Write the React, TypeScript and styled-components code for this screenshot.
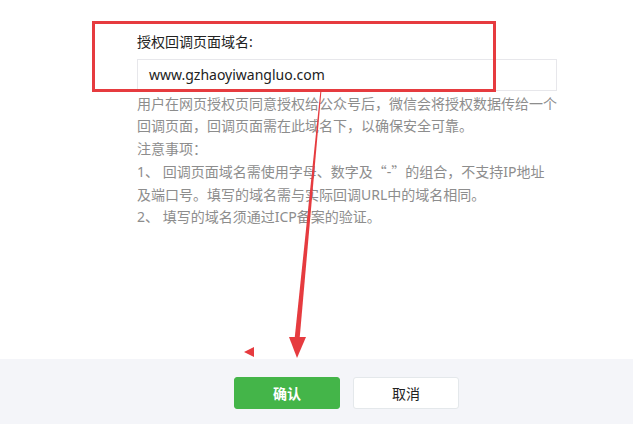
import React from "react";
import styled, { createGlobalStyle } from "styled-components";

const Global = createGlobalStyle`
  html, body { margin: 0; padding: 0; background: #ffffff; }
  body { font-family: "Noto Sans", "Noto Sans CJK SC", sans-serif; }
`;

const Page = styled.div`
  position: relative;
  width: 633px;
  height: 424px;
  display: flex;
  flex-direction: column;
  overflow: hidden;
`;

const Body = styled.div`
  flex: 1;
  padding: 32px 0 0 137px;
  display: flex;
  flex-direction: column;
`;

const Label = styled.div`
  font-size: 14px;
  line-height: 20px;
  color: #222222;
  height: 20px;
`;

const Input = styled.div`
  margin-top: 7px;
  width: 420px;
  height: 32px;
  box-sizing: border-box;
  border: 1px solid #e7e7eb;
  padding: 0 11px;
  font-size: 14px;
  line-height: 30px;
  color: #222222;
`;

const Desc = styled.div`
  margin-top: 2px;
  width: 430px;
  font-size: 14px;
  line-height: 22.4px;
  color: #8d8d8d;
  white-space: nowrap;
`;

const Quote = styled.span<{ $side: "open" | "close" }>`
  font-family: "Noto Sans CJK SC", sans-serif;
  display: inline-block;
  width: 14px;
  text-align: ${(p) => (p.$side === "open" ? "right" : "left")};
`;

const Footer = styled.div`
  height: 65px;
  background: #f4f5f9;
  display: flex;
  align-items: flex-start;
  padding: 18px 0 0 234px;
  box-sizing: border-box;
  gap: 13px;
`;

const Button = styled.div<{ $primary?: boolean }>`
  width: 106px;
  height: 32px;
  box-sizing: border-box;
  border-radius: 3px;
  display: flex;
  align-items: center;
  justify-content: center;
  font-size: 14px;
  background: ${(p) => (p.$primary ? "#44b549" : "#ffffff")};
  color: ${(p) => (p.$primary ? "#ffffff" : "#222222")};
  border: 1px solid ${(p) => (p.$primary ? "#44b549" : "#e4e8eb")};
  font-weight: ${(p) => (p.$primary ? 600 : 400)};
`;

const Highlight = styled.div`
  position: absolute;
  left: 92px;
  top: 21px;
  width: 404px;
  height: 71px;
  box-sizing: border-box;
  border: 3px solid #e63b3f;
  pointer-events: none;
`;

const Overlay = styled.svg`
  position: absolute;
  left: 0;
  top: 0;
  pointer-events: none;
`;

export default function App() {
  return (
    <>
      <Global />
      <Page>
        <Body>
          <Label>授权回调页面域名:</Label>
          <Input>www.gzhaoyiwangluo.com</Input>
          <Desc>
            用户在网页授权页同意授权给公众号后，微信会将授权数据传给一个
            <br />
            回调页面，回调页面需在此域名下，以确保安全可靠。
            <br />
            注意事项：
            <br />
            1、 回调页面域名需使用字母、数字及<Quote $side="open">“</Quote>-<Quote $side="close">”</Quote>的组合，不支持IP地址
            <br />
            及端口号。填写的域名需与实际回调URL中的域名相同。
            <br />
            2、 填写的域名须通过ICP备案的验证。
          </Desc>
        </Body>
        <Footer>
          <Button $primary>确认</Button>
          <Button>取消</Button>
        </Footer>
        <Highlight />
        <Overlay width="633" height="424" viewBox="0 0 633 424">
          <polygon points="320.5,90 321.5,90 299.5,340 294.5,340" fill="#e63b3f" />
          <polygon points="289,337 306,337 297,358" fill="#e63b3f" />
          <polygon points="244,352 254,347 254,357" fill="#e63b3f" />
        </Overlay>
      </Page>
    </>
  );
}
